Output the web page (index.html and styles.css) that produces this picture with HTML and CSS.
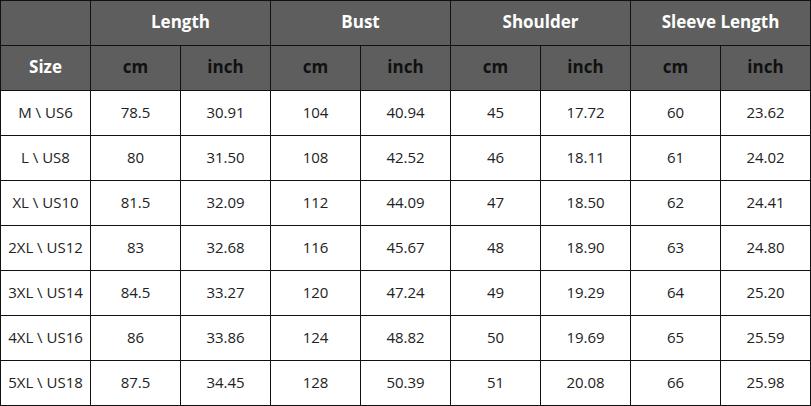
FILE: index.html
```html
<!DOCTYPE html>
<html>
<head>
<meta charset="utf-8">
<link rel="stylesheet" href="styles.css">
</head>
<body>
<div class="chart">
  <div class="cell head"></div>
  <div class="cell head top span2">Length</div>
  <div class="cell head top span2">Bust</div>
  <div class="cell head top span2">Shoulder</div>
  <div class="cell head top span2">Sleeve Length</div>

  <div class="cell head top">Size</div>
  <div class="cell head unit">cm</div><div class="cell head unit">inch</div>
  <div class="cell head unit">cm</div><div class="cell head unit">inch</div>
  <div class="cell head unit">cm</div><div class="cell head unit">inch</div>
  <div class="cell head unit">cm</div><div class="cell head unit">inch</div>

  <div class="cell">M \ US6</div><div class="cell">78.5</div><div class="cell">30.91</div><div class="cell">104</div><div class="cell">40.94</div><div class="cell">45</div><div class="cell">17.72</div><div class="cell">60</div><div class="cell">23.62</div>
  <div class="cell">L \ US8</div><div class="cell">80</div><div class="cell">31.50</div><div class="cell">108</div><div class="cell">42.52</div><div class="cell">46</div><div class="cell">18.11</div><div class="cell">61</div><div class="cell">24.02</div>
  <div class="cell">XL \ US10</div><div class="cell">81.5</div><div class="cell">32.09</div><div class="cell">112</div><div class="cell">44.09</div><div class="cell">47</div><div class="cell">18.50</div><div class="cell">62</div><div class="cell">24.41</div>
  <div class="cell">2XL \ US12</div><div class="cell">83</div><div class="cell">32.68</div><div class="cell">116</div><div class="cell">45.67</div><div class="cell">48</div><div class="cell">18.90</div><div class="cell">63</div><div class="cell">24.80</div>
  <div class="cell">3XL \ US14</div><div class="cell">84.5</div><div class="cell">33.27</div><div class="cell">120</div><div class="cell">47.24</div><div class="cell">49</div><div class="cell">19.29</div><div class="cell">64</div><div class="cell">25.20</div>
  <div class="cell">4XL \ US16</div><div class="cell">86</div><div class="cell">33.86</div><div class="cell">124</div><div class="cell">48.82</div><div class="cell">50</div><div class="cell">19.69</div><div class="cell">65</div><div class="cell">25.59</div>
  <div class="cell">5XL \ US18</div><div class="cell">87.5</div><div class="cell">34.45</div><div class="cell">128</div><div class="cell">50.39</div><div class="cell">51</div><div class="cell">20.08</div><div class="cell">66</div><div class="cell">25.98</div>
</div>
</body>
</html>
```

FILE: styles.css
```css
html, body {
  margin: 0;
  padding: 0;
  background: #ffffff;
}

.chart {
  display: grid;
  grid-template-columns: repeat(9, 89px);
  grid-auto-rows: 44px;
  gap: 1px;
  padding: 1px;
  width: 809px;
  background: #111111;
  font-family: "Open Sans", "Liberation Sans", sans-serif;
}

.cell {
  background: #ffffff;
  display: flex;
  align-items: center;
  justify-content: center;
  padding-bottom: 2px;
  font-size: 15px;
  color: #222222;
}

.head {
  background: #5e5e5e;
  font-weight: 700;
  font-size: 17px;
  padding-bottom: 4px;
}

.top {
  color: #ffffff;
}

.unit {
  color: #111111;
}

.span2 {
  grid-column: span 2;
}
```
